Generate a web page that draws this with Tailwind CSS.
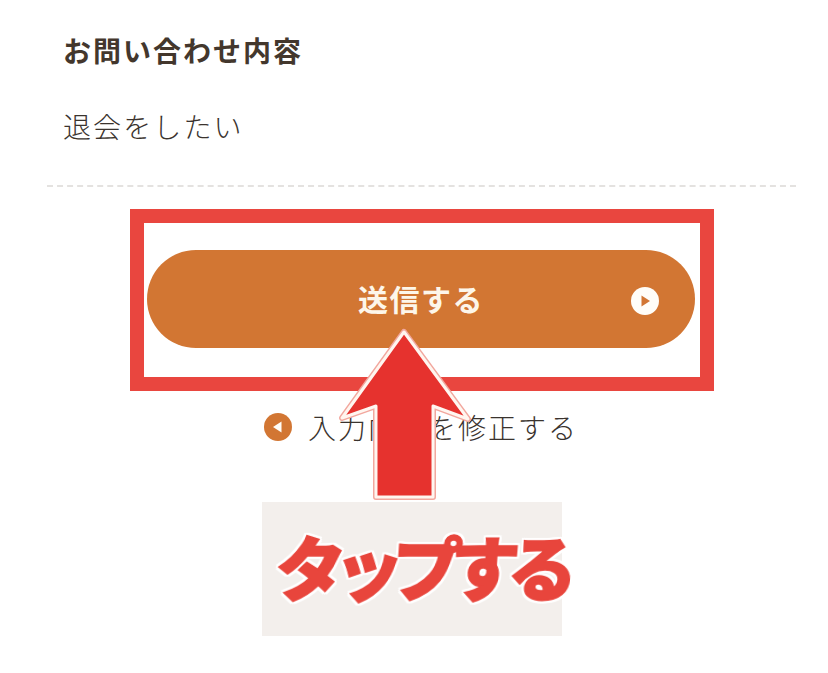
<!DOCTYPE html>
<html lang="ja">
<head>
    <meta charset="UTF-8">
    <meta name="viewport" content="width=device-width, initial-scale=1.0">
    <title>お問い合わせ内容</title>
    <script src="https://cdn.jsdelivr.net/npm/@tailwindcss/browser@4"></script>
</head>
<body class="relative w-[828px] h-[673px] overflow-hidden bg-white font-['Noto_Sans_CJK_JP','Noto_Sans',sans-serif]">
    <!-- 入力内容 -->
    <section class="ml-[47px] w-[749px] h-[187px] pt-[30px] px-[16px] border-b-2 border-dashed border-[#e4e2e0]">
        <h2 class="text-[28px] leading-[40px] tracking-[2px] font-bold text-[#43372d]">お問い合わせ内容</h2>
        <p class="mt-[36px] text-[28px] leading-[40px] tracking-[2.1px] font-light text-[#3a332e]">退会をしたい</p>
    </section>

    <!-- 送信ボタン -->
    <div class="mt-[22px] ml-[130px] w-[584px] h-[182px] border-[14px] border-[#e9463f] pl-[3px] pt-[27px]">
        <button class="relative flex items-center justify-center w-[548px] h-[98px] pb-[2px] rounded-full bg-[#d27633] text-[#fdf6ea] text-[30px] tracking-[1.5px] font-bold">
            送信する
            <svg class="absolute right-[36px] top-[37px]" width="28" height="28" viewBox="0 0 28 28">
                <circle cx="14" cy="14" r="14" fill="#fffdf8"/>
                <path d="M10.5 8.5 L19 14 L10.5 19.5 Z" fill="#d27633"/>
            </svg>
        </button>
    </div>

    <!-- 修正リンク -->
    <div class="mt-[16px] ml-[264px] flex items-center gap-[16px] h-[40px]">
        <svg width="28" height="28" viewBox="0 0 28 28">
            <circle cx="14" cy="14" r="14" fill="#d27633"/>
            <path d="M17.5 8.5 L9 14 L17.5 19.5 Z" fill="#fffdf8"/>
        </svg>
        <span class="text-[28px] tracking-[2px] font-light text-[#3a332e] whitespace-nowrap">入力内容を修正する</span>
    </div>

    <!-- タップする -->
    <div class="mt-[55px] ml-[262px] w-[300px] h-[134px] bg-[#f3efec] pl-[14px] pt-[13px] whitespace-nowrap">
        <span class="inline-block origin-left -skew-x-[4deg] text-[70px] leading-[102px] tracking-[-12px] font-black text-[#e8453c] [-webkit-text-stroke:1.5px_#e8453c] [filter:drop-shadow(2px_0_0_#fff)_drop-shadow(-2px_0_0_#fff)_drop-shadow(0_2px_0_#fff)_drop-shadow(0_-2px_0_#fff)]">タップする</span>
    </div>

    <!-- 矢印 -->
    <svg class="absolute left-0 top-0 pointer-events-none" width="828" height="673" viewBox="0 0 828 673">
        <path d="M404 332 L468 419 L433 406 L433 497 L376 497 L376 406 L342 418 Z" fill="none" stroke="#f2a79e" stroke-width="6" stroke-linejoin="round"/>
        <path d="M404 332 L468 419 L433 406 L433 497 L376 497 L376 406 L342 418 Z" fill="#e6322e" stroke="#fff6f0" stroke-width="3" stroke-linejoin="round"/>
    </svg>
</body>
</html>
